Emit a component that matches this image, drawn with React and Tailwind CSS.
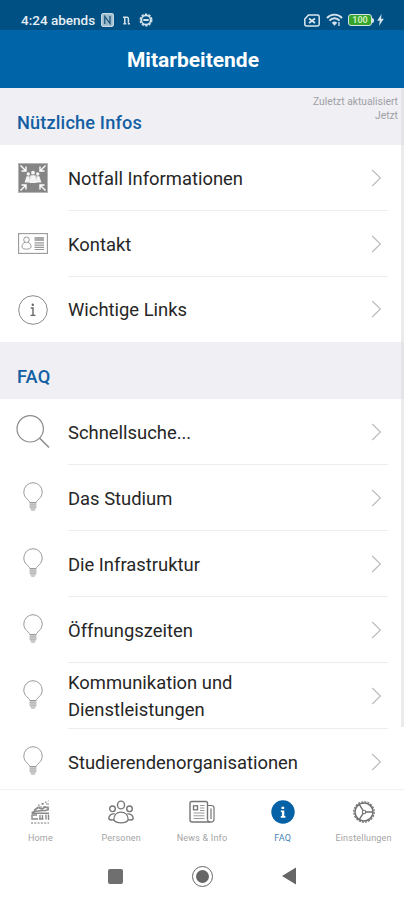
function ChevronIcon() {
  return (
    <svg className="h-[18px] w-[11px] shrink-0" viewBox="0 0 11 18" fill="none" stroke="#bdbdc0" strokeWidth="1.2">
      <path d="M1.2 1 L9.4 9 L1.2 17" />
    </svg>
  );
}

// Assembly point sign: four arrows pointing at a group of people
function AssemblyIcon() {
  return (
    <svg className="h-[30px] w-[30px]" viewBox="0 0 30 30">
      <rect x="0.5" y="0.5" width="29" height="29" fill="#858585" stroke="#b5b5b5" />
      <g stroke="#fff" strokeWidth="1.4" fill="none">
        <path d="M2.5 2.5 L7.5 7.5 M8 3.5 V8 H3.5" />
        <path d="M27.5 2.5 L22.5 7.5 M22 3.5 V8 H26.5" />
        <path d="M2.5 27.5 L7.5 22.5 M8 26.5 V22 H3.5" />
        <path d="M27.5 27.5 L22.5 22.5 M22 26.5 V22 H26.5" />
      </g>
      <g fill="#f4f4f4">
        <circle cx="15" cy="9.7" r="1.9" />
        <circle cx="10.3" cy="11" r="1.7" />
        <circle cx="19.7" cy="11" r="1.7" />
        <path d="M12.5 12.3 h5 l1 7.7 h-7 z" />
        <path d="M8.6 13.2 h3 l0.4 6.3 h-5.4 z" />
        <path d="M18.4 13.2 h3 l2 6.3 h-5.4 z" />
      </g>
    </svg>
  );
}

function ContactIcon() {
  return (
    <svg className="-mt-[2px] h-[21px] w-[30px]" viewBox="0 0 30 21" fill="none" stroke="#999">
      <rect x="0.6" y="0.6" width="28.8" height="19.8" strokeWidth="1.1" />
      <circle cx="8.5" cy="6.8" r="2.8" strokeWidth="1" />
      <path d="M7 9.3 C4.8 10.2 4 11.8 4 14.2 C4 16.8 13 16.8 13 14.2 C13 11.8 12.2 10.2 10 9.3" strokeWidth="1" />
      <rect x="16.5" y="4" width="9.5" height="4" fill="#aaa" stroke="none" />
      <path d="M16.5 9.8 H26 M16.5 12.1 H26 M16.5 14.4 H26 M16.5 16.5 H26" strokeWidth="1.2" />
    </svg>
  );
}

function InfoIcon() {
  return (
    <svg className="h-[30px] w-[30px]" viewBox="0 0 30 30" fill="none" stroke="#8c8c8c">
      <circle cx="15" cy="15" r="14.3" strokeWidth="1" />
      <circle cx="14.8" cy="9.8" r="1.2" fill="#666" stroke="none" />
      <path d="M12.8 13 H15 V20.2 M12.5 20.4 H17.4" stroke="#666" strokeWidth="1.4" />
    </svg>
  );
}

function SearchIcon() {
  return (
    <svg className="h-[34px] w-[34px]" viewBox="0 0 34 34" fill="none" stroke="#8c8c8c" strokeWidth="1.2">
      <circle cx="14.2" cy="13.8" r="13.2" />
      <path d="M23.5 23 L33 32.5" strokeWidth="1.6" />
    </svg>
  );
}

function BulbIcon() {
  return (
    <svg className="-mt-[2px] h-[30px] w-5" viewBox="0 0 20 30" fill="none" stroke="#999" strokeWidth="1">
      <path d="M6.8 20.5 C6.8 18 0.8 16.5 0.8 10 A9.2 9.3 0 0 1 19.2 10 C19.2 16.5 13.2 18 13.2 20.5 Z" />
      <path d="M6.5 21 H13.5 V25.5 L11.5 29 H8.5 L6.5 25.5 Z" fill="#cacaca" stroke="none" />
      <path d="M7 22.8 H13 M7 25.2 H13" stroke="#b3b3b3" strokeWidth="0.8" />
    </svg>
  );
}

function HomeIcon() {
  return (
    <svg className="h-6 w-5" viewBox="0 0 20 24" fill="none" stroke="#8a8a8a" strokeWidth="1.2">
      <path d="M8 5.5 L19 0.8" strokeDasharray="1.8 2" />
      <path d="M12 4.5 L14 3.5 M16 4 H19 M9 7 H19" strokeDasharray="3 1" />
      <path d="M4 10.5 L8 7.5 L12 9 L15 7 L19 8.5" strokeWidth="1.6" />
      <path d="M1.5 12.8 C7 9.5 12 12 19 9.5 M2 13.2 H19" strokeWidth="1.5" />
      <path d="M7 15 H2 V19 H8 M10 15 V19.5 M12.5 15 V19 M16 14.5 V19.5 M18.5 14.5 V20 M9 19 H13.5" strokeWidth="1.4" />
      <path d="M1 23 H19" stroke="#a5a5a5" strokeWidth="1.3" strokeDasharray="2 1.3" />
    </svg>
  );
}

function PeopleIcon() {
  return (
    <svg className="h-6 w-[26px]" viewBox="0 0 26 24" fill="none" stroke="#757575" strokeWidth="1.4">
      <ellipse cx="13" cy="5" rx="3.5" ry="3.9" />
      <circle cx="4.5" cy="8.8" r="2.8" />
      <circle cx="21.5" cy="8.8" r="2.8" />
      <path d="M5.8 19.9 C5.8 15 8.8 12.1 13 12.1 C17.2 12.1 20.2 15 20.2 19.9 C17.7 23.9 8.3 23.9 5.8 19.9 Z" />
      <path d="M6.8 13.9 C3 13.4 0.8 15.8 0.8 18.7 C2 20.2 4.2 20.2 6 19.6" />
      <path d="M19.2 13.9 C23 13.4 25.2 15.8 25.2 18.7 C24 20.2 21.8 20.2 20 19.6" />
    </svg>
  );
}

function NewsIcon() {
  return (
    <svg className="h-6 w-[26px]" viewBox="0 0 26 24" fill="none" stroke="#757575" strokeWidth="1.4">
      <path d="M18.5 19.5 V3.2 Q18.5 1.5 16.8 1.5 H2.7 Q1 1.5 1 3.2 V19.8 Q1 22 3.2 22 H21.5" />
      <path d="M18.5 5.5 H22.5 Q25 5.5 25 8 V19.5 Q25 22 21.8 22 Q18.5 22 18.5 19.5 M22 8.5 V19" strokeWidth="1.2" />
      <rect x="4.5" y="5.8" width="4" height="4" strokeWidth="1.3" />
      <path d="M11 5.5 H15.5 M11 8 H15.5 M11 10.5 H15.5 M4.5 13 H15.5 M4.5 15.8 H15.5 M4.5 18.5 H15.5" stroke="#999" strokeWidth="1" />
    </svg>
  );
}

function FaqIcon() {
  return (
    <svg className="h-6 w-6" viewBox="0 0 24 24">
      <circle cx="12" cy="12" r="11.7" fill="#0562a6" />
      <path d="M10.5 6.8 H13.2 V9 H10.5 Z M9.8 10.5 H13.3 V16 H14.4 V17.7 H9.8 V16 H10.9 V12.1 H9.8 Z" fill="#fff" />
    </svg>
  );
}

function SettingsIcon() {
  return (
    <svg className="h-6 w-6" viewBox="0 0 24 24" fill="none" stroke="#6f6f6f">
      <circle cx="12" cy="12" r="10.2" strokeWidth="1.2" strokeDasharray="2.1 1.104" />
      <circle cx="12" cy="12" r="9" strokeWidth="1.5" />
      <circle cx="12" cy="12" r="1.7" strokeWidth="1.1" />
      <path d="M13.7 12 H20.5 M11 10.4 L7.4 4.6 M11 13.6 L7.4 19.4" strokeWidth="1.4" />
    </svg>
  );
}

function StatusBar() {
  return (
    <div className="flex h-[30px] items-center justify-between bg-[#005083] pt-[10px] pr-5 pl-[21px] text-[#e6eff5]">
      <div className="flex items-center">
        <span className="w-[80px] text-[13.5px] font-medium whitespace-nowrap">4:24 abends</span>
        <svg className="h-[14px] w-[13px]" viewBox="0 0 13 14" fill="none" stroke="#c9dae6">
          <rect x="0.7" y="0.7" width="11.6" height="12.6" rx="1.5" fill="#9cb9cc" strokeWidth="1.3" />
          <path d="M3.8 11 V3.5 L9 10.5 V3" stroke="#12507a" strokeWidth="1.2" />
        </svg>
        <svg className="mr-[9px] ml-[9px] h-[9px] w-[7px]" viewBox="0 0 7 9" fill="none" stroke="#d5e3ec" strokeWidth="1.5">
          <path d="M0 1.2 H4 Q5.4 1.2 5.4 2.8 V6.8 M1.8 1 V8 M0.4 7.8 H3.2 M4.8 7.8 H7" />
        </svg>
        <svg className="h-[14px] w-[14px]" viewBox="0 0 14 14" fill="none" stroke="#d5e3ec">
          <circle cx="7" cy="7" r="5.8" strokeWidth="1.4" strokeDasharray="2.4 1.24" />
          <circle cx="7" cy="7" r="4.6" strokeWidth="1.7" />
          <path d="M4.3 7 H9.7" strokeWidth="2" />
        </svg>
      </div>
      <div className="flex items-center">
        <svg className="h-[13px] w-4" viewBox="0 0 16 13" fill="none" stroke="#dce8f0">
          <path d="M4.5 1 H13.5 Q15.2 1 15.2 2.7 V10.3 Q15.2 12 13.5 12 H2.5 Q0.8 12 0.8 10.3 V5 Z" strokeWidth="1.5" />
          <path d="M5 4.5 L11 9 M11 4.5 L5 9" strokeWidth="1.7" />
        </svg>
        <svg className="ml-[6px] h-[14px] w-[17px]" viewBox="0 0 17 14" fill="none" stroke="#d5e3ec" strokeWidth="1.9">
          <path d="M1 5 C5 0.5 12 0.5 16 5" />
          <path d="M3.5 7.6 C6.2 4.5 10.8 4.5 13.5 7.6" />
          <path d="M5.8 9.8 C7.5 8 9.5 8 11.2 9.8 L8.5 12.8 Z" fill="#d5e3ec" stroke="none" />
          <path d="M13 9 V13" strokeWidth="1.3" />
        </svg>
        <div className="ml-[5px] flex h-3 w-6 items-center justify-center rounded-[3px] border-[1.5px] border-[#d5e3ec] bg-[#35a52c] text-[9px] leading-none font-bold text-[#c8eebc]">
          100
        </div>
        <div className="h-[5px] w-[2px] rounded-r bg-[#d5e3ec]"></div>
        <svg className="ml-[3px] h-3 w-[7px]" viewBox="0 0 7 12">
          <path d="M4.5 0 L0.2 6.8 H2.8 L2 12 L6.8 4.8 H4.1 Z" fill="#d5e3ec" />
        </svg>
      </div>
    </div>
  );
}

function SectionHeader({ title, children }) {
  return (
    <div className="flex h-[57px] shrink-0 justify-between bg-[#efeff4] pr-[6px] pl-[17px]">
      <h2 className="pt-[22px] text-[18.2px] leading-[26px] font-medium tracking-[0.15px] text-[#135fa3]">{title}</h2>
      {children}
    </div>
  );
}

function ListRow({ icon, label, last }) {
  return (
    <div className={`flex shrink-0 items-center ${last ? "h-[65px]" : "h-[66px]"}`}>
      <div className="flex w-[68px] shrink-0 items-center pl-4">
        <div className="flex w-[34px] justify-center">{icon}</div>
      </div>
      <div className={`mr-4 flex h-full grow items-center justify-between border-b pr-[6px] ${last ? "border-transparent" : "border-[#ececee]"}`}>
        <span className="max-w-[240px] pt-[1px] text-[18.4px] leading-[27px] text-[#262626]">{label}</span>
        <ChevronIcon />
      </div>
    </div>
  );
}

const infoItems = [
  { label: "Notfall Informationen", icon: <AssemblyIcon /> },
  { label: "Kontakt", icon: <ContactIcon /> },
  { label: "Wichtige Links", icon: <InfoIcon /> },
];

const faqItems = [
  { label: "Schnellsuche...", icon: <SearchIcon /> },
  { label: "Das Studium", icon: <BulbIcon /> },
  { label: "Die Infrastruktur", icon: <BulbIcon /> },
  { label: "Öffnungszeiten", icon: <BulbIcon /> },
  { label: "Kommunikation und Dienstleistungen", icon: <BulbIcon /> },
  { label: "Studierendenorganisationen", icon: <BulbIcon /> },
];

const tabs = [
  { label: "Home", icon: <HomeIcon /> },
  { label: "Personen", icon: <PeopleIcon /> },
  { label: "News & Info", icon: <NewsIcon /> },
  { label: "FAQ", icon: <FaqIcon />, active: true },
  { label: "Einstellungen", icon: <SettingsIcon /> },
];

function App() {
  return (
    <div className="flex h-[900px] w-[404px] flex-col overflow-hidden bg-white font-[Roboto,sans-serif]">
      <StatusBar />

      {/* App header */}
      <header className="flex h-[58px] shrink-0 items-center justify-center bg-[#0064a8] pt-[4px] pr-[18px]">
        <h1 className="text-[21px] font-bold whitespace-nowrap text-white">Mitarbeitende</h1>
      </header>

      {/* Scrollable list */}
      <main className="relative flex h-[701px] shrink-0 flex-col overflow-hidden">
        <SectionHeader title="Nützliche Infos">
          <p className="pt-[7px] text-right text-[10.3px] leading-[14px] text-[#a0a0a4]">
            Zuletzt aktualisiert
            <br />
            Jetzt
          </p>
        </SectionHeader>
        {infoItems.map((item, index) => (
          <ListRow key={item.label} {...item} last={index === infoItems.length - 1} />
        ))}
        <SectionHeader title="FAQ" />
        {faqItems.map((item) => (
          <ListRow key={item.label} {...item} />
        ))}
        {/* Scroll indicator */}
        <div className="absolute top-0 right-0 h-[639px] w-[3px] bg-[#dddde0]/60"></div>
      </main>

      {/* Tab bar */}
      <nav className="flex h-[63px] shrink-0 border-t border-[#f2f2f2]">
        {tabs.map((tab) => (
          <div key={tab.label} className="flex flex-1 flex-col items-center pt-[10px]">
            {tab.icon}
            <span className={`mt-[9px] text-[9px] leading-[11px] tracking-[0.2px] whitespace-nowrap ${tab.active ? "text-[#4a86b8]" : "text-[#a3a3a3]"}`}>
              {tab.label}
            </span>
          </div>
        ))}
      </nav>

      {/* Android navigation buttons */}
      <div className="flex h-12 shrink-0 items-center justify-center gap-[69px]">
        <div className="h-[15px] w-[15px] rounded-[2px] bg-[#6f6f6f]"></div>
        <div className="flex h-[21px] w-[21px] items-center justify-center rounded-full border-[1.5px] border-[#666]">
          <div className="h-[13px] w-[13px] rounded-full bg-[#666]"></div>
        </div>
        <svg className="h-[18px] w-[14px]" viewBox="0 0 14 18">
          <path d="M0 9 L14 0.5 V17.5 Z" fill="#666" />
        </svg>
      </div>
    </div>
  );
}

export default App;
